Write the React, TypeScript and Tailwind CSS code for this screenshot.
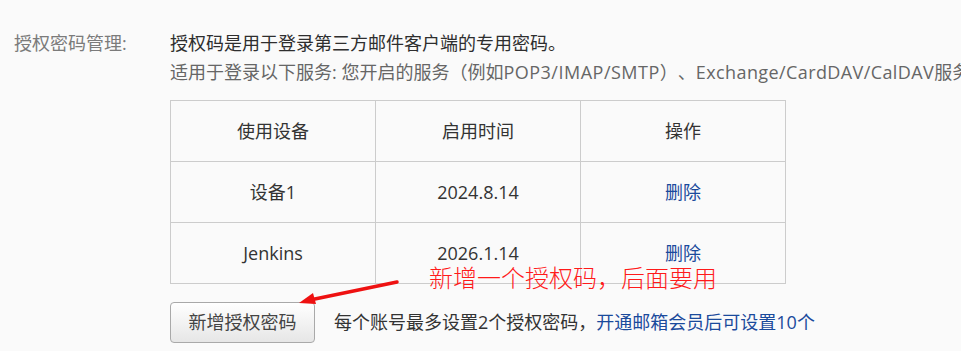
import React from 'react';

const font = { fontFamily: '"Open Sans", "Noto Sans CJK SC", sans-serif' };

const rows = [
  { device: '设备1', date: '2024.8.14' },
  { device: 'Jenkins', date: '2026.1.14' },
];

function Cell({ children, className = '' }: { children: React.ReactNode; className?: string }) {
  return (
    <div className={`w-[205px] h-[61px] border-r border-b border-[#cccccc] flex items-center justify-center ${className}`}>
      {children}
    </div>
  );
}

export default function App() {
  return (
    <div
      className="relative w-[961px] h-[351px] overflow-hidden bg-[#fafafa] text-[18px] [text-spacing-trim:space-all]"
      style={font}
    >
      <div className="flex pt-[29px] pl-[14px]">
        <div className="w-[156px] shrink-0 leading-[29px] text-[#7b7b7b]">授权密码管理:</div>
        <div className="flex-1 min-w-0">
          <p className="leading-[29px] text-[#2e2e2e] whitespace-nowrap">授权码是用于登录第三方邮件客户端的专用密码。</p>
          <p className="leading-[29px] text-[#666666] whitespace-nowrap">
            适用于登录以下服务: 您开启的服务（例如<span className="tracking-[0.5px]">POP3/IMAP/SMTP</span>）、
            <span className="tracking-[0.4px]">Exchange/CardDAV/CalDAV</span>服务
          </p>

          <div className="mt-[13px] w-fit grid grid-cols-3 border-t border-l border-[#cccccc] text-[#333333]">
            <Cell>使用设备</Cell>
            <Cell>启用时间</Cell>
            <Cell>操作</Cell>
            {rows.map((row) => (
              <React.Fragment key={row.device}>
                <Cell>{row.device}</Cell>
                <Cell>{row.date}</Cell>
                <Cell>
                  <a href="#" className="text-[#1a4a9c]">删除</a>
                </Cell>
              </React.Fragment>
            ))}
          </div>

          <div className="mt-[18px] flex items-center gap-[19px]">
            <button
              type="button"
              className="w-[145px] h-[41px] rounded-[4px] border border-[#a9a9a9] bg-gradient-to-b from-white to-[#e6e6e6] text-[#444444]"
            >
              新增授权密码
            </button>
            <p className="text-[#333333] whitespace-nowrap">
              每个账号最多设置2个授权密码，<a href="#" className="text-[#1a4a9c]">开通邮箱会员后可设置10个</a>
            </p>
          </div>
        </div>
      </div>

      {/* annotation */}
      <span className="absolute left-[429px] top-[263px] text-[24px] leading-[30px] text-[#ff1a1a] font-light whitespace-nowrap">
        新增一个授权码，后面要用
      </span>
      <svg className="absolute left-0 top-0" width="961" height="351" viewBox="0 0 961 351">
        <line x1="397" y1="282" x2="310" y2="300" stroke="#ee1111" strokeWidth="3.5" strokeLinecap="round" />
        <polygon points="299,303 313,293 316,304" fill="#ee1111" />
      </svg>
    </div>
  );
}
